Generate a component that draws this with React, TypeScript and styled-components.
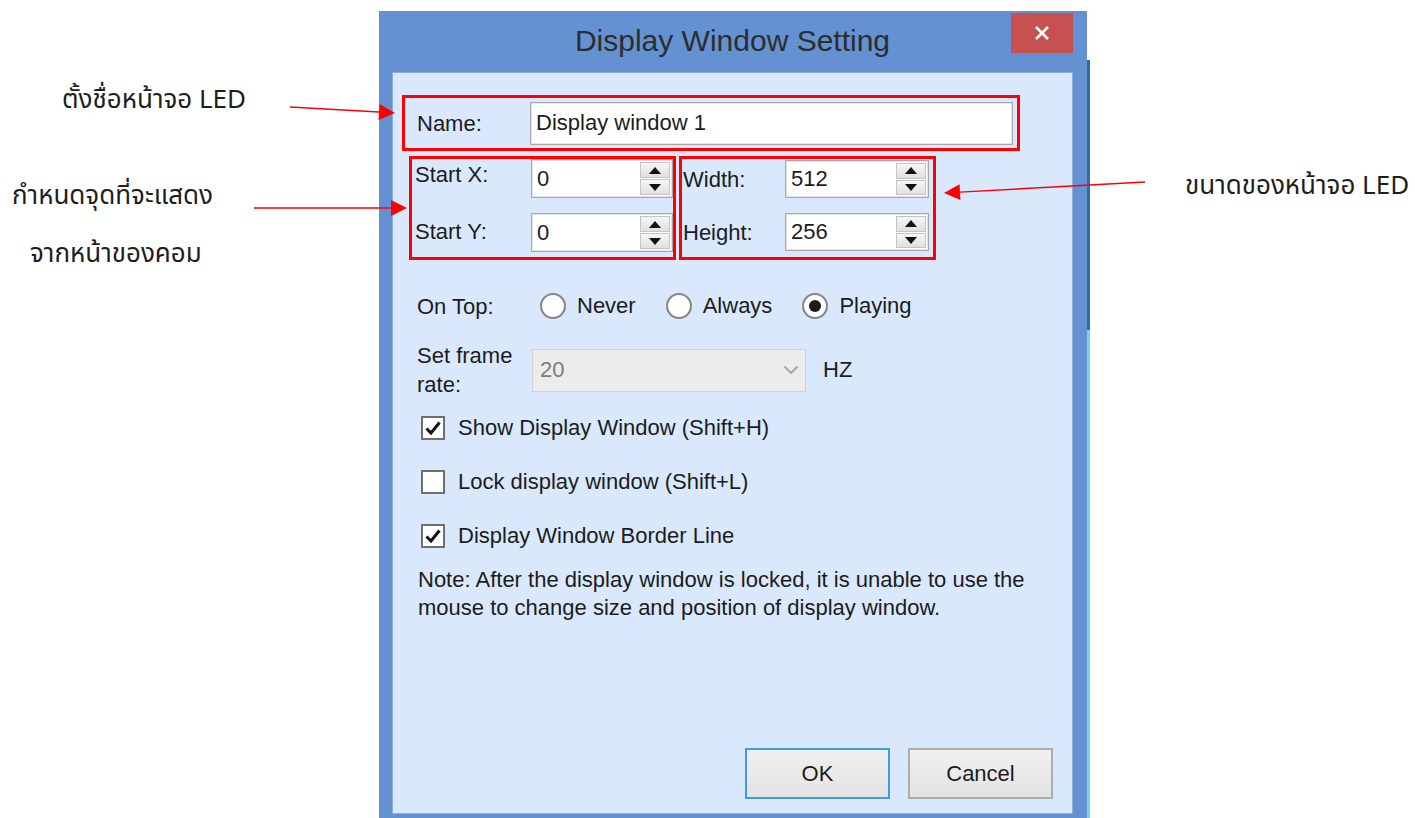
import React, { useState } from 'react'
import styled, { createGlobalStyle } from 'styled-components'

const GlobalStyle = createGlobalStyle`
  html, body {
    margin: 0;
    padding: 0;
    background: #fff;
  }
  body {
    font-family: "Liberation Sans", Arial, sans-serif;
  }
`

const Page = styled.div`
  position: relative;
  width: 1415px;
  height: 818px;
  overflow: hidden;
  display: flex;
  align-items: flex-start;
  background: #fff;
`

// captions on both sides of the dialog
const SideNotes = styled.div<{ $w?: number; $top: number }>`
  flex: ${(p) => (p.$w ? `0 0 ${p.$w}px` : '1')};
  padding-top: ${(p) => p.$top}px;
  display: flex;
  flex-direction: column;
`

const Caption = styled.div<{ $indent: number; $gap?: number }>`
  margin-left: ${(p) => p.$indent}px;
  margin-top: ${(p) => p.$gap ?? 0}px;
  font-family: "Noto Sans Thai", "Noto Sans", "Liberation Sans", sans-serif;
  font-size: 26px;
  line-height: 30px;
  color: #1e1e1e;
  white-space: nowrap;
`

const ArrowLayer = styled.svg`
  position: absolute;
  inset: 0;
  pointer-events: none;
`

const BackStrip = styled.div`
  flex: 0 0 3px;
  height: 818px;
  background: linear-gradient(
    #fff 0 60px,
    #2c6db3 60px 330px,
    #7fd0ea 330px 818px
  );
`

// window chrome
const DialogWindow = styled.div`
  flex: 0 0 708px;
  margin-top: 11px;
  box-sizing: border-box;
  padding: 0 14px 8px 13px;
  background: #6391d2;
  display: flex;
  flex-direction: column;
`

const TitleBar = styled.div`
  height: 61px;
  display: grid;
  grid-template-columns: 1fr auto 1fr;
`

const Title = styled.div`
  grid-column: 2;
  align-self: center;
  padding-bottom: 2px;
  font-size: 30px;
  color: #2d2d2d;
  white-space: nowrap;
`

const CloseButton = styled.div`
  grid-column: 3;
  justify-self: end;
  margin-top: 2px;
  width: 62px;
  height: 40px;
  background: #c75050;
  display: flex;
  align-items: center;
  justify-content: center;
`

const ClientArea = styled.div`
  height: 742px;
  box-sizing: border-box;
  background: #d9e8fc;
  border: 1px solid #8cacd9;
  padding: 22px 0 14px 9px;
  display: flex;
  flex-direction: column;
  font-size: 22px;
  color: #1c1c1c;
`

// red marker frames around the field groups
const Highlight = styled.div<{ $w: number; $h: number; $column?: boolean; $pad: string; $gap?: number }>`
  width: ${(p) => p.$w}px;
  height: ${(p) => p.$h}px;
  box-sizing: border-box;
  border: 3px solid #ff0000;
  padding: ${(p) => p.$pad};
  display: flex;
  flex-direction: ${(p) => (p.$column ? 'column' : 'row')};
  align-items: ${(p) => (p.$column ? 'stretch' : 'center')};
  gap: ${(p) => p.$gap ?? 0}px;
`

const GroupRow = styled.div`
  display: flex;
  gap: 3px;
  margin: 5px 0 0 7px;
`

const FieldRow = styled.div`
  display: flex;
  align-items: center;
`

const FieldLabel = styled.div<{ $w: number; $lift?: number }>`
  flex: 0 0 ${(p) => p.$w}px;
  margin-bottom: ${(p) => p.$lift ?? 0}px;
  line-height: 29px;
  white-space: nowrap;
`

const InputFrame = styled.div<{ $w: number; $h: number }>`
  width: ${(p) => p.$w}px;
  height: ${(p) => p.$h}px;
  box-sizing: border-box;
  background: #fff;
  border: 1px solid #a8a8a8;
  box-shadow: inset 0 0 0 1px #e4e4e4;
  display: flex;
  align-items: stretch;
`

const InputText = styled.span`
  flex: 1;
  align-self: center;
  padding-left: 5px;
  white-space: nowrap;
`

const SpinButtons = styled.div`
  flex: 0 0 30px;
  display: flex;
  flex-direction: column;
  gap: 1px;
  padding: 2px 2px 2px 0;
`

const SpinArrow = styled.div<{ $dir: 'up' | 'down' }>`
  flex: 1;
  box-sizing: border-box;
  background: linear-gradient(#f6f6f6, #e0e0e0);
  border: 1px solid #c4c4c4;
  display: flex;
  align-items: center;
  justify-content: center;

  &::after {
    content: '';
    border-left: 6px solid transparent;
    border-right: 6px solid transparent;
    ${(p) => (p.$dir === 'up' ? 'border-bottom: 7px solid #111;' : 'border-top: 7px solid #111;')}
  }
`

const OptionRow = styled.div<{ $top: number; $indent?: number }>`
  display: flex;
  align-items: center;
  margin-top: ${(p) => p.$top}px;
  margin-left: ${(p) => p.$indent ?? 15}px;
`

const RadioOption = styled.label`
  display: flex;
  align-items: center;
  gap: 11px;
  margin-right: 30px;
  line-height: 30px;
`

const RadioCircle = styled.span<{ $on: boolean }>`
  width: 26px;
  height: 26px;
  box-sizing: border-box;
  border-radius: 50%;
  border: 2px solid #868686;
  background: radial-gradient(circle, #fff 55%, #ededed 100%);
  display: flex;
  align-items: center;
  justify-content: center;

  &::after {
    content: '';
    width: 12px;
    height: 12px;
    border-radius: 50%;
    background: ${(p) => (p.$on ? '#1a1a1a' : 'transparent')};
  }
`

const Select = styled.div`
  width: 274px;
  height: 43px;
  box-sizing: border-box;
  background: #ececec;
  border: 1px solid #d2d2d2;
  display: flex;
  align-items: center;
  justify-content: space-between;
  padding: 0 6px 0 7px;
  color: #7c7c7c;
`

const Unit = styled.span`
  margin-left: 17px;
`

const CheckRow = styled.label<{ $top: number }>`
  display: flex;
  align-items: center;
  gap: 13px;
  margin: ${(p) => p.$top}px 0 0 19px;
  line-height: 30px;
`

const CheckBox = styled.span`
  width: 24px;
  height: 24px;
  box-sizing: border-box;
  border: 2px solid #707070;
  background: #fff;
  display: flex;
  align-items: center;
  justify-content: center;
`

const NoteText = styled.p`
  margin: 15px 0 0 16px;
  line-height: 28px;
  width: 640px;
`

const ButtonBar = styled.div`
  margin-top: auto;
  display: flex;
  justify-content: flex-end;
  gap: 18px;
  padding-right: 19px;
`

const DialogButton = styled.button<{ $primary?: boolean }>`
  width: 145px;
  height: 51px;
  box-sizing: border-box;
  background: linear-gradient(#f1f1f1, #e3e3e3);
  border: 2px solid ${(p) => (p.$primary ? '#3d9ae8' : '#adadad')};
  font-family: inherit;
  font-size: 22px;
  color: #1c1c1c;
`

type Arrow = { from: [number, number]; to: [number, number] }
const arrows: Arrow[] = [
  { from: [290, 107], to: [395, 113] },
  { from: [254, 208], to: [407, 208] },
  { from: [1145, 182], to: [944, 193] },
]

function RedArrow({ from, to }: Arrow) {
  const [x1, y1] = from
  const [x2, y2] = to
  const len = Math.hypot(x2 - x1, y2 - y1)
  const ux = (x2 - x1) / len
  const uy = (y2 - y1) / len
  const bx = x2 - ux * 16
  const by = y2 - uy * 16
  const px = -uy * 8
  const py = ux * 8
  return (
    <g>
      <line x1={x1} y1={y1} x2={bx} y2={by} stroke="#ff0000" strokeWidth={1.5} />
      <polygon points={`${x2},${y2} ${bx + px},${by + py} ${bx - px},${by - py}`} fill="#ff0000" />
    </g>
  )
}

function SpinField({ value, w, h }: { value: string; w: number; h: number }) {
  return (
    <InputFrame $w={w} $h={h}>
      <InputText>{value}</InputText>
      <SpinButtons>
        <SpinArrow $dir="up" />
        <SpinArrow $dir="down" />
      </SpinButtons>
    </InputFrame>
  )
}

const Tick = () => (
  <svg width="18" height="18" viewBox="0 0 18 18">
    <path d="M2.5 9.5 L7 14 L15.5 3.5" fill="none" stroke="#111" strokeWidth="3" />
  </svg>
)

const onTopOptions = ['Never', 'Always', 'Playing']

export default function App() {
  const [onTop, setOnTop] = useState('Playing')
  const [checks, setChecks] = useState({ show: true, lock: false, border: true })

  const toggle = (key: keyof typeof checks) => setChecks({ ...checks, [key]: !checks[key] })

  return (
    <Page>
      <GlobalStyle />
      <SideNotes $w={379} $top={85}>
        <Caption $indent={62}>ตั้งชื่อหน้าจอ LED</Caption>
        <Caption $indent={12} $gap={66}>กำหนดจุดที่จะแสดง</Caption>
        <Caption $indent={30} $gap={28}>จากหน้าของคอม</Caption>
      </SideNotes>

      <DialogWindow>
        <TitleBar>
          <Title>Display Window Setting</Title>
          <CloseButton>
            <svg width="16" height="16" viewBox="0 0 16 16">
              <path d="M2 2 L14 14 M14 2 L2 14" stroke="#fff" strokeWidth="2.6" />
            </svg>
          </CloseButton>
        </TitleBar>

        <ClientArea>
          <Highlight $w={618} $h={56} $pad="0 0 0 12px">
            <FieldLabel $w={113}>Name:</FieldLabel>
            <InputFrame $w={483} $h={43}>
              <InputText>Display window 1</InputText>
            </InputFrame>
          </Highlight>

          <GroupRow>
            <Highlight $w={267} $h={104} $column $pad="0 0 5px 3px" $gap={15}>
              <FieldRow>
                <FieldLabel $w={116} $lift={8}>Start X:</FieldLabel>
                <SpinField value="0" w={142} h={39} />
              </FieldRow>
              <FieldRow>
                <FieldLabel $w={116} $lift={3}>Start Y:</FieldLabel>
                <SpinField value="0" w={142} h={39} />
              </FieldRow>
            </Highlight>
            <Highlight $w={257} $h={104} $column $pad="1px 4px 6px 1px" $gap={15}>
              <FieldRow>
                <FieldLabel $w={102}>Width:</FieldLabel>
                <SpinField value="512" w={144} h={38} />
              </FieldRow>
              <FieldRow>
                <FieldLabel $w={102}>Height:</FieldLabel>
                <SpinField value="256" w={144} h={38} />
              </FieldRow>
            </Highlight>
          </GroupRow>

          <OptionRow $top={31}>
            <FieldLabel $w={123}>On Top:</FieldLabel>
            {onTopOptions.map((opt) => (
              <RadioOption key={opt} onClick={() => setOnTop(opt)}>
                <RadioCircle $on={onTop === opt} />
                {opt}
              </RadioOption>
            ))}
          </OptionRow>

          <OptionRow $top={20}>
            <FieldLabel $w={115}>
              Set frame
              <br />
              rate:
            </FieldLabel>
            <Select>
              <span>20</span>
              <svg width="16" height="10" viewBox="0 0 16 10">
                <path d="M1.5 1.5 L8 8 L14.5 1.5" fill="none" stroke="#a9a9a9" strokeWidth="2.2" />
              </svg>
            </Select>
            <Unit>HZ</Unit>
          </OptionRow>

          <CheckRow $top={14} onClick={() => toggle('show')}>
            <CheckBox>{checks.show && <Tick />}</CheckBox>
            Show Display Window (Shift+H)
          </CheckRow>
          <CheckRow $top={24} onClick={() => toggle('lock')}>
            <CheckBox>{checks.lock && <Tick />}</CheckBox>
            Lock display window (Shift+L)
          </CheckRow>
          <CheckRow $top={24} onClick={() => toggle('border')}>
            <CheckBox>{checks.border && <Tick />}</CheckBox>
            Display Window Border Line
          </CheckRow>

          <NoteText>
            Note: After the display window is locked, it is unable to use the mouse to change size and
            position of display window.
          </NoteText>

          <ButtonBar>
            <DialogButton $primary>OK</DialogButton>
            <DialogButton>Cancel</DialogButton>
          </ButtonBar>
        </ClientArea>
      </DialogWindow>

      <BackStrip />

      <SideNotes $top={171}>
        <Caption $indent={95}>ขนาดของหน้าจอ LED</Caption>
      </SideNotes>

      <ArrowLayer width={1415} height={818}>
        {arrows.map((a, i) => (
          <RedArrow key={i} {...a} />
        ))}
      </ArrowLayer>
    </Page>
  )
}
